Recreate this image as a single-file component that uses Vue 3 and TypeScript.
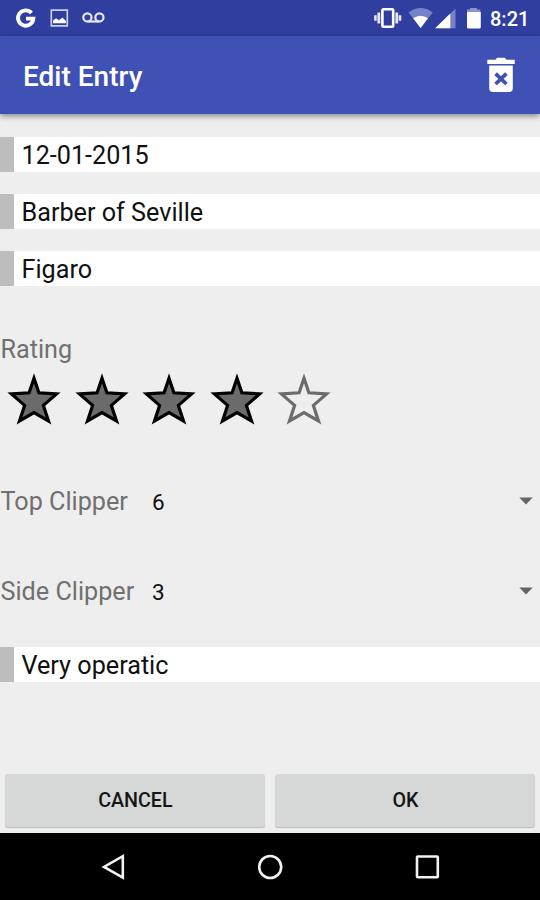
<script setup lang="ts">
import { ref } from 'vue'

const entries = ref<string[]>(['12-01-2015', 'Barber of Seville', 'Figaro'])
const rating = ref<number>(4)
const clippers = ref([
  { label: 'Top Clipper', value: 6 },
  { label: 'Side Clipper', value: 3 },
])
const notes = ref<string>('Very operatic')
</script>

<template>
  <div class="screen">
    <header class="status">
      <svg class="status-left" viewBox="0 0 120 36">
        <path d="M31.5 12.9A7.7 7.7 0 1 0 33.4 18.6H26" fill="none" stroke="#fff" stroke-width="3.8" />
        <path d="M51.3 10.1h16v15.8h-16z" fill="none" stroke="#c9cdee" stroke-width="1.7" />
        <path d="M53 23.2v-2.7l3-2.2 3 2 3.5-2.7 3.5 3.5v2.1z" fill="#fff" />
        <g fill="none" stroke="#e6e8fa" stroke-width="2.2">
          <circle cx="87.4" cy="17.4" r="4.1" />
          <circle cx="99.4" cy="17.4" r="4.1" />
          <path d="M87.4 21.5h12" />
        </g>
      </svg>
      <div class="status-right">
        <svg class="status-icons" viewBox="370 0 115 36">
          <rect x="382.4" y="9.3" width="10.8" height="17.4" rx="1.2" fill="none" stroke="#fff" stroke-width="2.6" />
          <path d="M378.8 12.5v11M396.8 12.5v11" stroke="#e3e6f8" stroke-width="2.8" />
          <path d="M375.4 15.2v5.6M400 15.2v5.6" stroke="#e3e6f8" stroke-width="2.6" />
          <path d="M408.5 12.4Q420.5 3.8 432.8 12.4L420.6 28z" fill="#7581c8" />
          <path d="M413.2 18.3Q420.5 13.2 428 18.3L420.6 28z" fill="#fff" />
          <path d="M455.5 8.4v19.8h-20z" fill="#7581c8" />
          <path d="M450.3 13.5v14.7h-15.2z" fill="#fff" />
          <path d="M467 12v-2.5h3V8h7v1.5h3.4V12z" fill="#8a94d0" />
          <path d="M467 12h13.8v15.2a1.2 1.2 0 0 1-1.2 1.2h-11.4a1.2 1.2 0 0 1-1.2-1.2z" fill="#fff" />
        </svg>
        <span class="clock">8:21</span>
      </div>
    </header>

    <div class="appbar">
      <h1>Edit Entry</h1>
      <svg class="trash" viewBox="0 0 28 36" role="img" aria-label="Delete entry">
        <path d="M0.3 2.7h8l2-2h7.4l2 2h8v4.2H0.3z" fill="#fff" />
        <path fill-rule="evenodd" d="M2.2 8.5h23.6v22.7a3.8 3.8 0 0 1-3.8 3.8H6a3.8 3.8 0 0 1-3.8-3.8z" fill="#fff" />
        <path d="M8.6 16.6l10.8 10.4M19.4 16.6L8.6 27" stroke="#3f51b5" stroke-width="3.8" />
      </svg>
    </div>

    <main>
      <div class="fields">
        <div v-for="entry in entries" :key="entry" class="field">{{ entry }}</div>
      </div>

      <div class="rating-label">Rating</div>
      <div class="stars">
        <svg v-for="n in 5" :key="n" :class="['star', { on: n <= rating }]" viewBox="0 0 67.5 54" @click="rating = n">
          <polygon points="34,7.2 38.9,21.8 56.6,22.9 43.4,34.4 48.5,50 34,41.5 19.5,50 24.6,34.4 11.4,22.9 29.1,21.8" />
        </svg>
      </div>

      <div class="clippers">
        <div v-for="c in clippers" :key="c.label" class="clipper">
          <span class="label">{{ c.label }}</span>
          <span class="value">{{ c.value }}</span>
          <svg class="caret" viewBox="0 0 14 8"><path d="M0.3 0.4h13.4L7 7.6z" /></svg>
        </div>
      </div>

      <div class="field notes">{{ notes }}</div>

      <div class="actions">
        <button type="button">CANCEL</button>
        <button type="button">OK</button>
      </div>
    </main>

    <nav class="navbar">
      <svg viewBox="0 0 28 28"><path d="M23.8 3.2v21.4L5 13.9z" /></svg>
      <svg viewBox="0 0 28 28"><circle cx="14.2" cy="14" r="11" /></svg>
      <svg viewBox="0 0 28 28"><rect x="4" y="3.5" width="20.8" height="20.8" rx="0.8" /></svg>
    </nav>
  </div>
</template>

<style>
body {
  margin: 0;
}
</style>

<style scoped>
.screen {
  width: 540px;
  height: 900px;
  display: flex;
  flex-direction: column;
  overflow: hidden;
  background: #eeeeee;
  font-family: Roboto, "Liberation Sans", sans-serif;
}
svg {
  display: block;
}
.status {
  height: 36px;
  flex: none;
  display: flex;
  justify-content: space-between;
  background: #303f9f;
}
.status-left {
  width: 120px;
  height: 36px;
}
.status-right {
  display: flex;
  padding-right: 11px;
}
.status-icons {
  width: 115px;
  height: 36px;
}
.clock {
  width: 39px;
  margin-left: 5px;
  line-height: 38px;
  font-size: 20px;
  font-weight: 500;
  white-space: nowrap;
  color: #fff;
}
.appbar {
  height: 78px;
  box-sizing: border-box;
  flex: none;
  display: flex;
  align-items: center;
  justify-content: space-between;
  padding: 0 25px 0 23px;
  background: #3f51b5;
  color: #fff;
  box-shadow: 0 2px 6px rgba(0, 0, 0, 0.45);
}
h1 {
  margin: 0;
  padding-top: 3px;
  font-size: 28px;
  font-weight: 500;
  line-height: 36px;
}
.trash {
  width: 28px;
  height: 36px;
}
main {
  flex: 1;
  display: flex;
  flex-direction: column;
  padding-top: 23px;
}
.fields {
  display: flex;
  flex-direction: column;
  gap: 22.5px;
}
.field {
  height: 34.5px;
  box-sizing: border-box;
  border-left: 14.5px solid #bdbdbd;
  padding-left: 7.5px;
  background: #fff;
  color: #111;
  font-size: 25.2px;
  line-height: 37px;
}
.notes {
  line-height: 38px;
}
.rating-label {
  margin-top: 47px;
  height: 34px;
  line-height: 34px;
  padding-left: 0.5px;
  font-size: 25.2px;
  color: #707070;
}
.stars {
  display: flex;
  margin-top: 4px;
}
.star {
  width: 67.5px;
  height: 54px;
  fill: none;
  stroke: #6b6b6b;
  stroke-width: 3.2;
  stroke-miterlimit: 10;
}
.star.on {
  fill: #6b6b6b;
  stroke: #000;
}
.clippers {
  margin: 31px 0 11.5px;
}
.clipper {
  height: 90px;
  display: flex;
  align-items: center;
  padding-right: 7px;
}
.label {
  width: 152px;
  box-sizing: border-box;
  padding: 1px 0 0 0.5px;
  font-size: 25.2px;
  color: #707070;
}
.value {
  flex: 1;
  padding-top: 2px;
  font-size: 22.5px;
  color: #111;
}
.caret {
  width: 14px;
  height: 8px;
  fill: #646464;
}
.actions {
  margin-top: auto;
  display: grid;
  grid-template-columns: 1fr 1fr;
  gap: 10px;
  padding: 0 4.6px 6px 5.4px;
}
button {
  height: 53px;
  border: 0;
  border-radius: 3px;
  padding: 0;
  background: #d6d7d7;
  box-shadow: 0 1px 1px rgba(0, 0, 0, 0.22);
  font: 500 19.7px Roboto, "Liberation Sans", sans-serif;
  color: #151515;
}
.navbar {
  height: 67px;
  flex: none;
  display: flex;
  align-items: center;
  justify-content: center;
  gap: 129.3px;
  background: #000;
}
.navbar svg {
  width: 28px;
  height: 28px;
  fill: none;
  stroke: #f2f2f2;
  stroke-width: 2.6;
}
</style>
